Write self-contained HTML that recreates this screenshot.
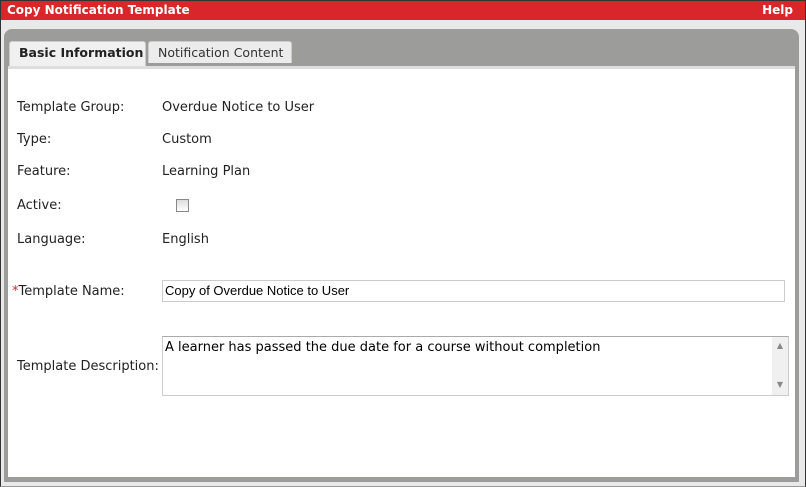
<!DOCTYPE html>
<html><head><style>
body{margin:0;width:806px;height:487px;overflow:hidden;background:#e9e9e9;font-family:"DejaVu Sans",Verdana,sans-serif;font-size:13px;color:#222;position:relative}
.frame{position:absolute;left:0;top:0;width:804px;height:485px;border:1px solid #333;border-bottom:1px solid #999;}
.title{position:absolute;left:1px;top:1px;width:804px;height:19px;background:#d9262b;color:#fff;font-weight:bold;font-size:12px;line-height:19px}
.title .l{position:absolute;left:6px}.title .r{position:absolute;right:12px}
.panel{position:absolute;left:4px;top:29px;width:795px;height:453px;background:#9c9c9b;border-radius:8px 8px 0 0}
.content{position:absolute;left:8px;top:66px;width:787px;height:411px;background:#fff;border-top:3px solid #ddd;box-sizing:border-box}
.tab{position:absolute;top:41px;height:22px;background:#ececec;border:1px solid #ccc;border-bottom:none;box-sizing:border-box;line-height:21px;font-size:12.5px;padding:0 9px;border-radius:3px 3px 0 0;white-space:nowrap;overflow:hidden}
.lab{position:absolute;left:17px;white-space:nowrap}
.val{position:absolute;left:162px;white-space:nowrap}
</style></head><body>
<div class="frame"></div>
<div class="title"><span class="l">Copy Notification Template</span><span class="r">Help</span></div>
<div class="panel"></div>
<div class="content"></div>
<div class="tab" style="left:9px;width:137px;font-weight:bold;background:#f0f0f0;height:25px">Basic Information</div>
<div class="tab" style="left:148px;width:144px;color:#333">Notification Content</div>
<div class="lab" style="top:100px">Template Group:</div><div class="val" style="top:100px">Overdue Notice to User</div>
<div class="lab" style="top:132px">Type:</div><div class="val" style="top:132px">Custom</div>
<div class="lab" style="top:164px">Feature:</div><div class="val" style="top:164px">Learning Plan</div>
<div class="lab" style="top:198px">Active:</div>
<div style="position:absolute;left:176px;top:199px;width:11px;height:11px;border:1px solid #888;background:linear-gradient(#ddd,#fff)"></div>
<div class="lab" style="top:232px">Language:</div><div class="val" style="top:232px">English</div>
<div class="lab" style="top:284px;left:12px"><span style="color:#d9262b">*</span>Template Name:</div>
<div style="position:absolute;left:162px;top:280px;width:623px;height:22px;border:1px solid #ccc;box-sizing:border-box;font-family:'Liberation Sans',Arial,sans-serif;font-size:13px;line-height:20px;padding-left:2px;color:#000">Copy of Overdue Notice to User</div>
<div class="lab" style="top:359px">Template Description:</div>
<div style="position:absolute;left:162px;top:336px;width:627px;height:60px;border:1px solid #ccc;border-top-color:#aaa;box-sizing:border-box;padding:3px 2px;color:#000;white-space:nowrap">A learner has passed the due date for a course without completion
<div style="position:absolute;right:0;top:0;width:16px;height:58px;background:#f0f0f0;color:#888;font-size:8px;text-align:center;line-height:12px"><div style="margin-top:3px">▲</div><div style="margin-top:27px">▼</div></div></div>
</body></html>
